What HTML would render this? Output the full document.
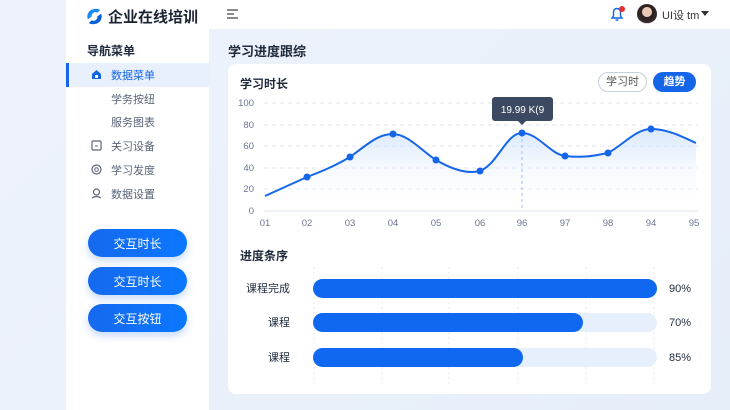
<!DOCTYPE html>
<html><head><meta charset="utf-8"><style>
*{margin:0;padding:0;box-sizing:border-box}
body{width:730px;height:410px;overflow:hidden;background:linear-gradient(135deg,#eef3fb,#e6eefa);font-family:"Liberation Sans","Noto Sans CJK SC",sans-serif;position:relative;color:#1f2a3d}
.side{position:absolute;left:66px;top:0;width:143px;height:410px;background:#fff}
.logo{position:absolute;left:86px;top:6px;font-size:15px;font-weight:bold;color:#1a2333;display:flex;align-items:center;gap:5px}
.nav-t{position:absolute;left:87px;top:42px;font-size:12px;font-weight:bold;color:#1f2a3d}
.item{position:absolute;left:66px;width:143px;height:24px;font-size:11px;color:#5a6478;display:flex;align-items:center;padding-left:45px}
.item.act{background:#e8f0fd;color:#1565e8;border-left:3px solid #1565e8;padding-left:42px}
.ic{position:absolute;left:91px;width:11px;height:11px}
.btn{position:absolute;left:88px;width:99px;height:28px;border-radius:14px;background:linear-gradient(90deg,#1669ee,#0a78ff);color:#fff;font-size:12px;display:flex;align-items:center;justify-content:center;box-shadow:0 4px 8px rgba(30,110,240,.25)}
.top{position:absolute;left:209px;top:0;width:521px;height:29px;background:#fff}
.card{position:absolute;left:228px;top:64px;width:483px;height:330px;background:#fff;border-radius:8px}
.h{position:absolute;font-size:12px;font-weight:bold;color:#1f2a3d}
</style></head><body>
<div class="side"></div>
<div class="logo"><svg width="17" height="17" viewBox="0 0 18 18"><path d="M9 1a8 8 0 0 0-7 11l4-3a4 4 0 0 1 6-4l3-3A8 8 0 0 0 9 1z" fill="#1a8cf0"/><path d="M9 17a8 8 0 0 0 7-11l-4 3a4 4 0 0 1-6 4l-3 3a8 8 0 0 0 6 1z" fill="#0a5fd8"/></svg>企业在线培训</div>
<div class="nav-t">导航菜单</div>
<div class="item act" style="top:63px">数据菜单</div>
<svg class="ic" style="top:69px" viewBox="0 0 11 11"><path d="M1 5L5.5 1 10 5v5H1z" fill="#1565e8"/><rect x="4" y="6" width="3" height="3" fill="#fff"/></svg>
<div class="item" style="top:87px">学务按纽</div>
<div class="item" style="top:110px">服务图表</div>
<div class="item" style="top:134px">关习设备</div>
<svg class="ic" style="top:140px" viewBox="0 0 11 11"><rect x="1" y="1" width="9" height="9" rx="1" fill="none" stroke="#5a6478" stroke-width="1.2"/><path d="M4 6h3" stroke="#5a6478"/></svg>
<div class="item" style="top:158px">学习发度</div>
<svg class="ic" style="top:164px" viewBox="0 0 11 11"><circle cx="5.5" cy="5.5" r="4.5" fill="none" stroke="#5a6478" stroke-width="1.2"/><circle cx="5.5" cy="5.5" r="1.8" fill="none" stroke="#5a6478"/></svg>
<div class="item" style="top:182px">数据设置</div>
<svg class="ic" style="top:188px" viewBox="0 0 11 11"><circle cx="5.5" cy="4" r="3" fill="none" stroke="#5a6478" stroke-width="1.2"/><path d="M1 10q4.5-3 9 0" fill="none" stroke="#5a6478" stroke-width="1.2"/></svg>
<div class="btn" style="top:229px">交互时长</div>
<div class="btn" style="top:267px">交互时长</div>
<div class="btn" style="top:304px">交互按钮</div>
<div class="top"></div>
<svg style="position:absolute;left:227px;top:9px" width="12" height="10"><path d="M0 1h11M0 5h7M0 9h11" stroke="#444" stroke-width="1.3"/></svg>
<svg style="position:absolute;left:609px;top:5px" width="18" height="18" viewBox="0 0 18 18"><path d="M3 13h10l-1.5-2V7a3.5 3.5 0 0 0-7 0v4z" fill="none" stroke="#1565e8" stroke-width="1.4"/><path d="M6.5 15h3" stroke="#1565e8" stroke-width="1.4"/><circle cx="13" cy="4" r="3" fill="#e52b2b"/></svg>
<div style="position:absolute;left:637px;top:4px;width:20px;height:20px;border-radius:50%;background:radial-gradient(circle at 50% 40%,#e9c8b8 30%,#2a1e1e 34%,#3a2c2c 70%,#ddd 72%)"></div>
<div style="position:absolute;left:662px;top:7px;font-size:11px;color:#333">UI设 tm</div>
<svg style="position:absolute;left:701px;top:11px" width="8" height="5"><path d="M0 0h8L4 5z" fill="#333"/></svg>
<div class="h" style="left:228px;top:41px;font-size:13px">学习进度跟综</div>
<div class="card"></div>
<div class="h" style="left:240px;top:75px">学习时长</div>
<div style="position:absolute;left:598px;top:72px;width:49px;height:20px;border:1px solid #c7cfdd;border-radius:10px;font-size:11px;color:#555;text-align:center;line-height:18px">学习时</div>
<div style="position:absolute;left:653px;top:72px;width:43px;height:20px;background:#1565e8;border-radius:10px;font-size:11px;color:#fff;text-align:center;line-height:20px;font-weight:bold">趋势</div>
<svg style="position:absolute;left:228px;top:90px" width="483" height="150" font-family="Liberation Sans" font-size="9.5" fill="#6b7590">
<defs><linearGradient id="g" x1="0" y1="0" x2="0" y2="1"><stop offset="0" stop-color="#cfe2fb"/><stop offset="1" stop-color="#fff" stop-opacity="0"/></linearGradient></defs>
<g stroke="#dde3ec" stroke-dasharray="4 4"><path d="M36 13H470M36 35H470M36 56H470M36 78H470M36 99H470"/></g>
<path d="M36 121H470" stroke="#dde3ec"/>
<g text-anchor="end"><text x="26" y="16">100</text><text x="26" y="38">80</text><text x="26" y="59">60</text><text x="26" y="81">40</text><text x="26" y="102">20</text><text x="26" y="124">0</text></g>
<g text-anchor="middle"><text x="37" y="136">01</text><text x="79" y="136">02</text><text x="122" y="136">03</text><text x="165" y="136">04</text><text x="208" y="136">05</text><text x="252" y="136">06</text><text x="294" y="136">96</text><text x="337" y="136">97</text><text x="380" y="136">98</text><text x="423" y="136">94</text><text x="466" y="136">95</text></g>
<path d="M37 106L79 87C100 79 110 74 122 67C140 54 150 44 165 44C180 44 195 62 208 70C225 80 240 84 252 81C270 74 278 43 294 43C310 43 322 64 337 66C355 68 365 66 380 63C395 55 408 39 423 39C440 39 455 47 468 53V121H37z" fill="url(#g)" opacity=".8"/>
<path d="M37 106L79 87C100 79 110 74 122 67C140 54 150 44 165 44C180 44 195 62 208 70C225 80 240 84 252 81C270 74 278 43 294 43C310 43 322 64 337 66C355 68 365 66 380 63C395 55 408 39 423 39C440 39 455 47 468 53" fill="none" stroke="#1565e8" stroke-width="2"/>
<path d="M294 43V121" stroke="#9cc0f2" stroke-dasharray="3 3"/>
<g fill="#1565e8"><circle cx="79" cy="87" r="3.5"/><circle cx="122" cy="67" r="3.5"/><circle cx="165" cy="44" r="3.5"/><circle cx="208" cy="70" r="3.5"/><circle cx="252" cy="81" r="3.5"/><circle cx="294" cy="43" r="3.5"/><circle cx="337" cy="66" r="3.5"/><circle cx="380" cy="63" r="3.5"/><circle cx="423" cy="39" r="3.5"/></g>
<rect x="264" y="7" width="61" height="24" rx="3" fill="#3b4a60"/><path d="M290 31l4 4 4-4z" fill="#3b4a60"/>
<text x="294.5" y="23" fill="#fff" text-anchor="middle" font-size="10">19.99 K(9</text>
</svg>
<div class="h" style="left:240px;top:247px">进度条序</div>
<svg style="position:absolute;left:228px;top:262px" width="483" height="130" font-family="Liberation Sans,Noto Sans CJK SC" font-size="11" fill="#1f2a3d">
<g stroke="#e3e8f0" stroke-dasharray="2 3"><path d="M86 5V125M154 5V125M221 5V125M290 5V125M358 5V125M426 5V125"/></g>
<g fill="#e6effc"><rect x="85" y="17" width="344" height="19" rx="9.5"/><rect x="85" y="51" width="344" height="19" rx="9.5"/><rect x="85" y="86" width="344" height="19" rx="9.5"/></g>
<g fill="#1068f0"><rect x="85" y="17" width="344" height="19" rx="9.5"/><rect x="85" y="51" width="270" height="19" rx="9.5"/><rect x="85" y="86" width="210" height="19" rx="9.5"/></g>
<g text-anchor="end"><text x="62" y="30">课程完成</text><text x="62" y="64">课程</text><text x="62" y="99">课程</text></g>
<g><text x="441" y="30">90%</text><text x="441" y="64">70%</text><text x="441" y="99">85%</text></g>
</svg>
</body></html>
